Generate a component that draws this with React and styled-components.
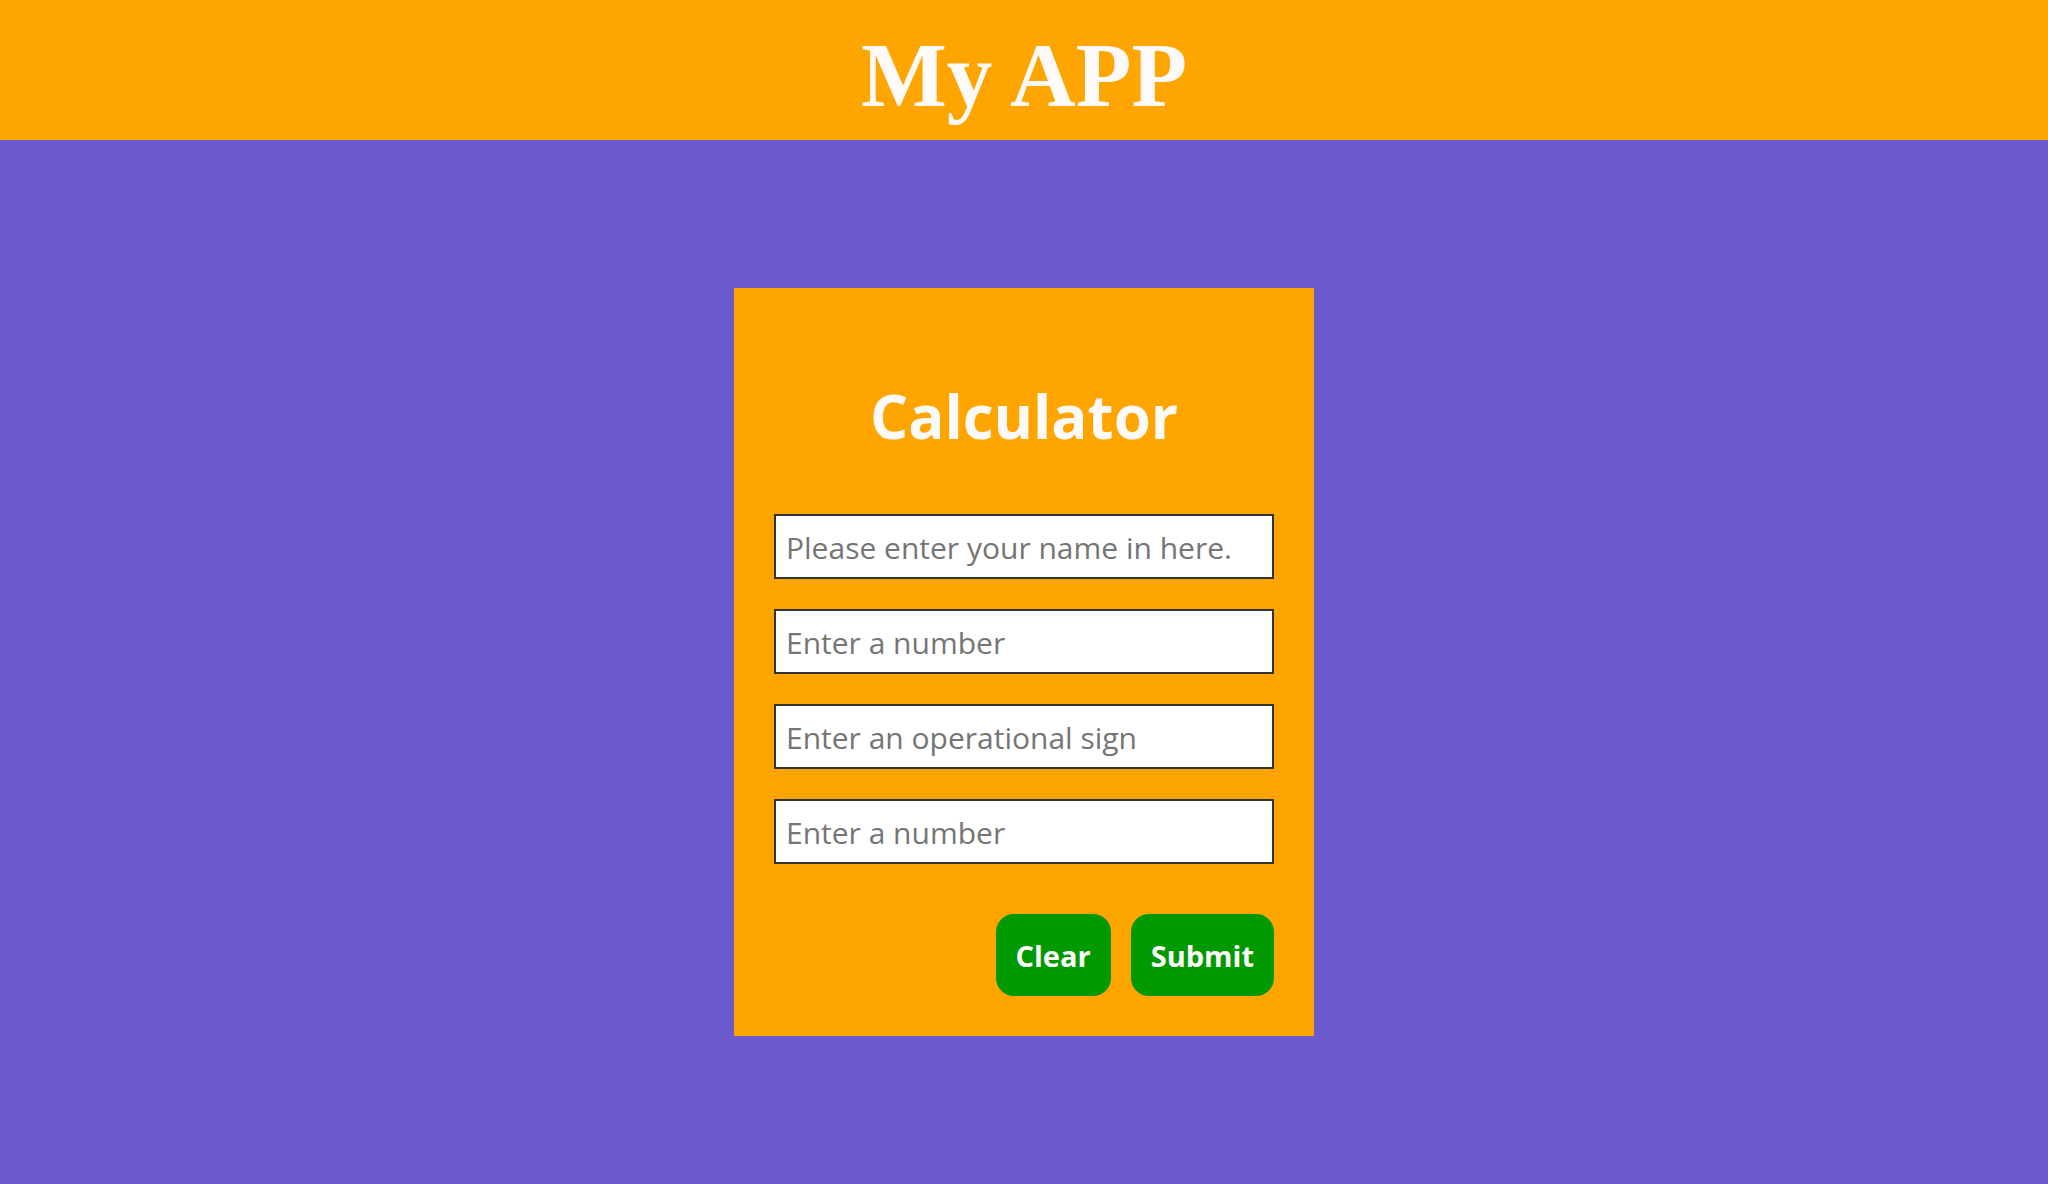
import styled, { createGlobalStyle } from "styled-components"

const GlobalStyle = createGlobalStyle`
    body {
        margin: 0;
        background-color: #6a5acd;
        font-family: "Open Sans", "Noto Sans", sans-serif;
    }
`;

const Header = styled.header`
    height: 140px;
    background-color: #ffa500;
    display: flex;
    align-items: center;
    justify-content: center;
`;

const AppTitle = styled.h1`
    margin: 0;
    padding-top: 10px;
    font-family: "Liberation Serif", "Times New Roman", serif;
    font-size: 91px;
    font-weight: bold;
    color: #fffafa;
`;

const Main = styled.main`
    display: flex;
    justify-content: center;
    padding: 148px 0 148px;
`;

const CalcCard = styled.form`
    width: 580px;
    box-sizing: border-box;
    padding: 40px;
    background-color: #ffa500;
    display: flex;
    flex-direction: column;
`;

const CalcTitle = styled.h2`
    margin: 52px 0 62px;
    text-align: center;
    font-size: 60px;
    line-height: 72px;
    font-weight: 700;
    color: #fffafa;
`;

const Fields = styled.div`
    display: flex;
    flex-direction: column;
    gap: 30px;
`;

const Input = styled.input`
    width: 100%;
    height: 65px;
    box-sizing: border-box;
    padding: 2px 10px 0;
    border: 2px solid #333;
    background: #fff;
    font-family: "Open Sans", "Noto Sans", sans-serif;
    font-size: 30px;
    color: #333;

    &::placeholder {
        color: #757575;
    }
`;

const ButtonRow = styled.div`
    display: flex;
    justify-content: flex-end;
    gap: 20px;
    margin-top: 50px;
`;

const Button = styled.button`
    height: 82px;
    padding: 0 20px;
    border: none;
    border-radius: 18px;
    background-color: #009900;
    color: #fffafa;
    font-family: "Open Sans", "Noto Sans", sans-serif;
    font-size: 29px;
    font-weight: 700;
    cursor: pointer;
`;

export default function App() {

    return (
        <>
            <GlobalStyle />
            <Header>
                <AppTitle>My APP</AppTitle>
            </Header>
            <Main>
                <CalcCard onSubmit={(e) => e.preventDefault()}>
                    <CalcTitle>Calculator</CalcTitle>
                    <Fields>
                        <Input type="text" placeholder="Please enter your name in here." />
                        <Input type="text" placeholder="Enter a number" />
                        <Input type="text" placeholder="Enter an operational sign" />
                        <Input type="text" placeholder="Enter a number" />
                    </Fields>
                    <ButtonRow>
                        <Button type="reset">Clear</Button>
                        <Button type="submit">Submit</Button>
                    </ButtonRow>
                </CalcCard>
            </Main>
        </>
    )
}
